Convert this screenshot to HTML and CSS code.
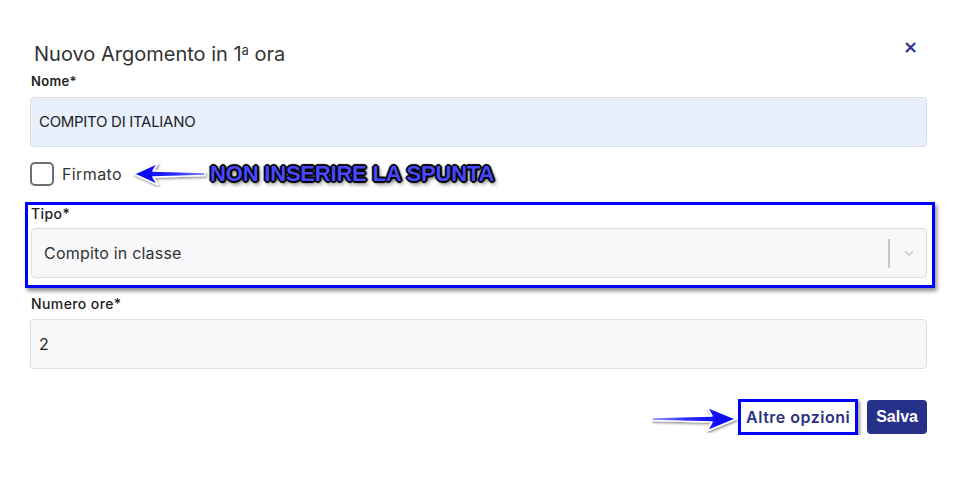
FILE: index.html
```html
<!DOCTYPE html>
<html lang="it">
<head>
<meta charset="utf-8">
<title>Nuovo Argomento</title>
<link rel="stylesheet" href="styles.css">
</head>
<body>
<div class="modal">
  <div class="modal-header">
    <h2 class="modal-title">Nuovo Argomento in 1<sup>a</sup> ora</h2>
    <button class="close" aria-label="Chiudi">×</button>
  </div>
  <div class="field">
    <label class="label label-strong">Nome*</label>
    <div class="input autofill">COMPITO DI ITALIANO</div>
  </div>
  <div class="check-row">
    <span class="checkbox"></span>
    <span class="check-label">Firmato</span>
    <svg class="arrow arrow-left" width="76" height="26" viewBox="0 0 76 26">
      <defs>
        <linearGradient id="gl" x1="0" x2="1" y1="0" y2="0">
          <stop offset="0" stop-color="#0000ee"/>
          <stop offset="0.6" stop-color="#2a2aff"/>
          <stop offset="1" stop-color="#8a8aff"/>
        </linearGradient>
        <filter id="sh" x="-20%" y="-40%" width="140%" height="180%">
          <feDropShadow dx="1" dy="1.5" stdDeviation="1.2" flood-color="#000" flood-opacity="0.45"/>
        </filter>
      </defs>
      <path d="M2 13 L26 2 L21 10 L73 11.5 L73 14.5 L21 16 L26 24 Z" fill="url(#gl)" stroke="#fff" stroke-width="1.6" stroke-linejoin="round" filter="url(#sh)"/>
    </svg>
    <span class="note">NON INSERIRE LA SPUNTA</span>
  </div>
  <div class="highlight-group">
    <label class="label">Tipo*</label>
    <div class="select">
      <span class="select-value">Compito in classe</span>
      <span class="select-sep"></span>
      <svg class="chevron" width="10" height="6" viewBox="0 0 10 6"><path d="M1 1 L5 5 L9 1" fill="none" stroke="#c4c4c8" stroke-width="1.4"/></svg>
    </div>
  </div>
  <div class="field field-hours">
    <label class="label">Numero ore*</label>
    <div class="input">2</div>
  </div>
  <div class="footer">
    <svg class="arrow arrow-right" width="90" height="28" viewBox="0 0 90 28">
      <defs>
        <linearGradient id="gr" x1="0" x2="1" y1="0" y2="0">
          <stop offset="0" stop-color="#9a9aff"/>
          <stop offset="0.4" stop-color="#2a2aff"/>
          <stop offset="1" stop-color="#0000ee"/>
        </linearGradient>
        <filter id="sh2" x="-20%" y="-40%" width="140%" height="180%">
          <feDropShadow dx="1" dy="1.5" stdDeviation="1.2" flood-color="#000" flood-opacity="0.45"/>
        </filter>
      </defs>
      <path d="M87 14 L58 2 L63 11 L3 12.5 L3 15.5 L63 17 L58 26 Z" fill="url(#gr)" stroke="#fff" stroke-width="1.6" stroke-linejoin="round" filter="url(#sh2)"/>
    </svg>
    <span class="btn-frame"><button class="btn btn-link">Altre opzioni</button></span>
    <button class="btn btn-primary">Salva</button>
  </div>
</div>
</body>
</html>
```
FILE: styles.css
```css
* { box-sizing: border-box; }
html, body { margin: 0; padding: 0; background: #fff; }
body {
  font-family: Inter, "Noto Sans", "Liberation Sans", sans-serif;
  color: #222;
}
.modal {
  width: 956px;
  padding: 39px 29px 0 30px;
  display: flex;
  flex-direction: column;
}
.modal-header {
  display: flex;
  justify-content: space-between;
  align-items: flex-start;
  height: 34px;
}
.modal-title {
  margin: 0 0 0 4px;
  font-size: 20px;
  font-weight: 400;
  color: #333;
  line-height: 30px;
  letter-spacing: 0;
}
.modal-title sup { font-size: 13px; line-height: 0; vertical-align: 0.5em; }
.close {
  border: 0;
  background: none;
  color: #2b3491;
  font-size: 18px;
  font-weight: 700;
  line-height: 18px;
  padding: 0;
  margin: -1px 9px 0 0;
  font-family: "DejaVu Sans", sans-serif;
}
.label {
  display: block;
  font-size: 14px;
  font-weight: 500;
  color: #222;
  line-height: 16px;
  margin: 0 0 8px 1px;
  letter-spacing: 0.4px;
}
.label-strong { font-weight: 600; font-size: 13px; letter-spacing: 0.3px; }
.field { display: flex; flex-direction: column; }
.input {
  height: 50px;
  border: 1px solid #dcdde3;
  border-radius: 4px;
  background: #f8f8fa;
  font-size: 16px;
  line-height: 48px;
  padding: 0 8px;
  color: #222;
}
.input.autofill { background: #e8f0fe; letter-spacing: -0.3px; font-size: 15px; }
.check-row {
  display: flex;
  align-items: center;
  height: 24px;
  margin: 15px 0 16px;
}
.checkbox {
  width: 24px;
  height: 24px;
  border: 2px solid #6b6f76;
  border-radius: 5px;
  background: #fff;
}
.check-label {
  margin-left: 8px;
  font-size: 16px;
  letter-spacing: 0.4px;
  color: #333;
}
.arrow-left { margin-left: 10px; }
.note {
  margin-left: 2px;
  font-family: "Liberation Sans", Arial, sans-serif;
  font-weight: 700;
  font-size: 22px;
  letter-spacing: -0.2px;
  color: #4848ff;
  text-shadow:
    -1px -1px 0 #000, 1px -1px 0 #000, -1px 1px 0 #000, 1px 1px 0 #000,
    -2px 0 1px #000, 2px 0 1px #000, 0 -2px 1px #000, 0 2px 1px #000,
    2px 3px 4px rgba(0,0,0,0.7);
}
.highlight-group {
  margin: 0 -8px 0 -5px;
  border: 3px solid #0000ff;
  box-shadow: 2px 3px 4px rgba(0,0,0,0.45);
  padding: 1px 5px 7px 3px;
  display: flex;
  flex-direction: column;
}
.highlight-group .label { margin-bottom: 6px; margin-left: 0; }
.select {
  height: 50px;
  border: 1px solid #dcdde3;
  border-radius: 4px;
  background: #f8f8fa;
  display: flex;
  align-items: center;
  padding: 0 12px;
}
.select-value { flex: 1; font-size: 16px; letter-spacing: 0.2px; color: #333; }
.select-sep { width: 2px; height: 29px; background: #c9c9cc; margin-right: 14px; }
.field-hours { margin-top: 8px; }
.field-hours .label { margin-bottom: 7px; }
.footer {
  display: flex;
  justify-content: flex-end;
  align-items: center;
  margin-top: 30px;
}
.arrow-right { margin-top: 3px; margin-right: -1px; }
.btn-frame {
  border: 3px solid #0000ff;
  box-shadow: 2px 2px 3px rgba(0,0,0,0.4);
  padding: 0 3px;
  height: 36px;
  display: flex;
  align-items: center;
  margin-right: 9px;
}
.btn {
  font-family: Inter, "Noto Sans", sans-serif;
  border: 0;
  border-radius: 4px;
  cursor: pointer;
}
.btn-link {
  background: #fff;
  color: #2b3280;
  font-weight: 600;
  font-size: 16px;
  letter-spacing: 0.5px;
  padding: 0 2px;
  line-height: 30px;
}
.btn-primary {
  background: #28318a;
  color: #fff;
  font-family: "Liberation Sans", Arial, sans-serif;
  font-weight: 700;
  font-size: 16px;
  height: 34px;
  padding: 0 9px;
}
```
